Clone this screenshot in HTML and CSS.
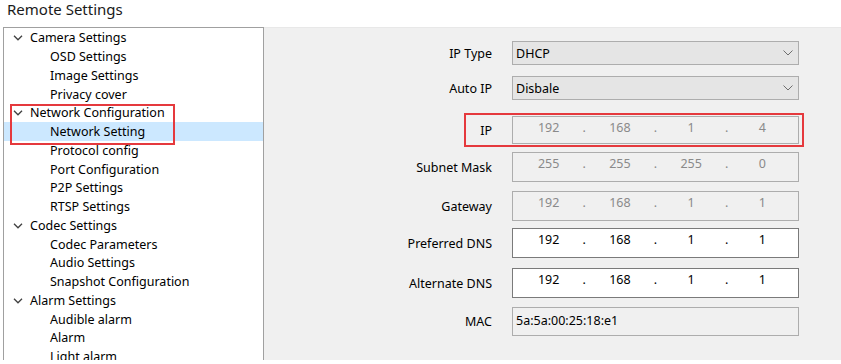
FILE: index.html
```html
<!DOCTYPE html>
<html>
<head>
<meta charset="utf-8">
<link rel="stylesheet" href="styles.css">
</head>
<body>
<div class="page">
  <div class="title">Remote Settings</div>
  <div class="main">
    <div class="tree">
      <div class="node parent"><svg class="chev" width="10" height="6" viewBox="0 0 10 6"><path d="M1 0.8 L5 4.8 L9 0.8" fill="none" stroke="#404040" stroke-width="1.3"/></svg>Camera Settings</div>
      <div class="node child">OSD Settings</div>
      <div class="node child">Image Settings</div>
      <div class="node child">Privacy cover</div>
      <div class="node parent"><svg class="chev" width="10" height="6" viewBox="0 0 10 6"><path d="M1 0.8 L5 4.8 L9 0.8" fill="none" stroke="#404040" stroke-width="1.3"/></svg>Network Configuration</div>
      <div class="node child selected">Network Setting</div>
      <div class="node child">Protocol config</div>
      <div class="node child">Port Configuration</div>
      <div class="node child">P2P Settings</div>
      <div class="node child">RTSP Settings</div>
      <div class="node parent"><svg class="chev" width="10" height="6" viewBox="0 0 10 6"><path d="M1 0.8 L5 4.8 L9 0.8" fill="none" stroke="#404040" stroke-width="1.3"/></svg>Codec Settings</div>
      <div class="node child">Codec Parameters</div>
      <div class="node child">Audio Settings</div>
      <div class="node child">Snapshot Configuration</div>
      <div class="node parent"><svg class="chev" width="10" height="6" viewBox="0 0 10 6"><path d="M1 0.8 L5 4.8 L9 0.8" fill="none" stroke="#404040" stroke-width="1.3"/></svg>Alarm Settings</div>
      <div class="node child">Audible alarm</div>
      <div class="node child">Alarm</div>
      <div class="node child">Light alarm</div>
    </div>
    <div class="content">
      <div class="form">
        <div class="label r-type">IP Type</div>
        <div class="select r-type"><span>DHCP</span><svg width="10" height="6" viewBox="0 0 10 6"><path d="M0.5 0.5 L5 5 L9.5 0.5" fill="none" stroke="#6e6e6e" stroke-width="1"/></svg></div>

        <div class="label r-auto">Auto IP</div>
        <div class="select r-auto"><span>Disbale</span><svg width="10" height="6" viewBox="0 0 10 6"><path d="M0.5 0.5 L5 5 L9.5 0.5" fill="none" stroke="#6e6e6e" stroke-width="1"/></svg></div>

        <div class="label r-ip">IP</div>
        <div class="ipfield disabled r-ip"><span class="seg">192</span><span class="dot">.</span><span class="seg">168</span><span class="dot">.</span><span class="seg">1</span><span class="dot">.</span><span class="seg">4</span></div>

        <div class="label r-mask">Subnet Mask</div>
        <div class="ipfield disabled r-mask"><span class="seg">255</span><span class="dot">.</span><span class="seg">255</span><span class="dot">.</span><span class="seg">255</span><span class="dot">.</span><span class="seg">0</span></div>

        <div class="label r-gw">Gateway</div>
        <div class="ipfield disabled r-gw"><span class="seg">192</span><span class="dot">.</span><span class="seg">168</span><span class="dot">.</span><span class="seg">1</span><span class="dot">.</span><span class="seg">1</span></div>

        <div class="label r-dns1">Preferred DNS</div>
        <div class="ipfield enabled r-dns1"><span class="seg">192</span><span class="dot">.</span><span class="seg">168</span><span class="dot">.</span><span class="seg">1</span><span class="dot">.</span><span class="seg">1</span></div>

        <div class="label r-dns2">Alternate DNS</div>
        <div class="ipfield enabled r-dns2"><span class="seg">192</span><span class="dot">.</span><span class="seg">168</span><span class="dot">.</span><span class="seg">1</span><span class="dot">.</span><span class="seg">1</span></div>

        <div class="label r-mac">MAC</div>
        <div class="macfield r-mac">5a:5a:00:25:18:e1</div>
      </div>
    </div>
  </div>
  <div class="mark mark-tree"></div>
  <div class="mark mark-ip"></div>
</div>
</body>
</html>
```

FILE: styles.css
```css
* { box-sizing: border-box; }
html, body { margin: 0; padding: 0; background: #ffffff; }
body {
  font-family: "Noto Sans", "Open Sans", sans-serif;
  font-size: 12.5px;
  color: #000;
  width: 841px;
  height: 364px;
  overflow: hidden;
}
.page { position: relative; width: 841px; height: 364px; }
.title {
  height: 27px;
  padding-left: 7px;
  font-size: 15px;
  line-height: 19px;
  color: #1a1a1a;
}
.main {
  display: flex;
  height: 333px;
}
.tree {
  width: 261px;
  margin-left: 3px;
  border: 1px solid #a0a0a0;
  border-bottom: none;
  background: #fff;
  overflow: hidden;
}
.node {
  height: 18.75px;
  line-height: 16px;
  padding-top: 2px;
  white-space: nowrap;
  display: flex;
  align-items: center;
  color: #000;
}
.node.parent { padding-left: 9px; }
.node.child { padding-left: 46px; }
.chev { margin-right: 7px; flex: none; }
.node.selected { background: #cce8ff; }

.content {
  flex: 1;
  background: #f0f0f0;
  border-top: 1px solid #e8e8e8;
}
.form {
  display: grid;
  grid-template-columns: 228px 287px;
  column-gap: 20px;
  padding-top: 13px;
}
.label {
  display: flex;
  align-items: center;
  justify-content: flex-end;
  color: #000;
}
.r-type { grid-row: 1; height: 24px; }
.r-auto { grid-row: 2; height: 24px; margin-top: 11px; }
.r-ip { grid-row: 3; height: 28px; margin-top: 16px; }
.r-mask { grid-row: 4; height: 30px; margin-top: 8px; }
.r-gw { grid-row: 5; height: 30px; margin-top: 9px; }
.r-dns1 { grid-row: 6; height: 30px; margin-top: 7px; }
.r-dns2 { grid-row: 7; height: 30px; margin-top: 10px; }
.r-mac { grid-row: 8; height: 29px; margin-top: 9px; }
.label { grid-column: 1; }
.select, .ipfield, .macfield { grid-column: 2; }

.select {
  background: #e5e5e5;
  border: 1px solid #adadad;
  display: flex;
  align-items: center;
  justify-content: space-between;
  padding: 0 5px 0 3px;
}
.ipfield {
  display: flex;
  border: 1px solid #adadad;
  padding-top: 1px;
  line-height: 20px;
}
.ipfield.disabled { background: #f0f0f0; color: #8a8a8a; }
.ipfield.enabled { background: #ffffff; color: #000; border-color: #7a7a7a; }
.seg { flex: 1; text-align: center; }
.dot { width: 0; display: flex; justify-content: center; }
.macfield {
  background: #f0f0f0;
  border: 1px solid #adadad;
  display: flex;
  align-items: center;
  padding-left: 3px;
  padding-bottom: 2px;
}

.mark {
  position: absolute;
  border: 2px solid #e5393d;
  pointer-events: none;
}
.mark-tree { left: 10px; top: 104px; width: 165px; height: 41px; }
.mark-ip { left: 464px; top: 113px; width: 340px; height: 34px; }
```
